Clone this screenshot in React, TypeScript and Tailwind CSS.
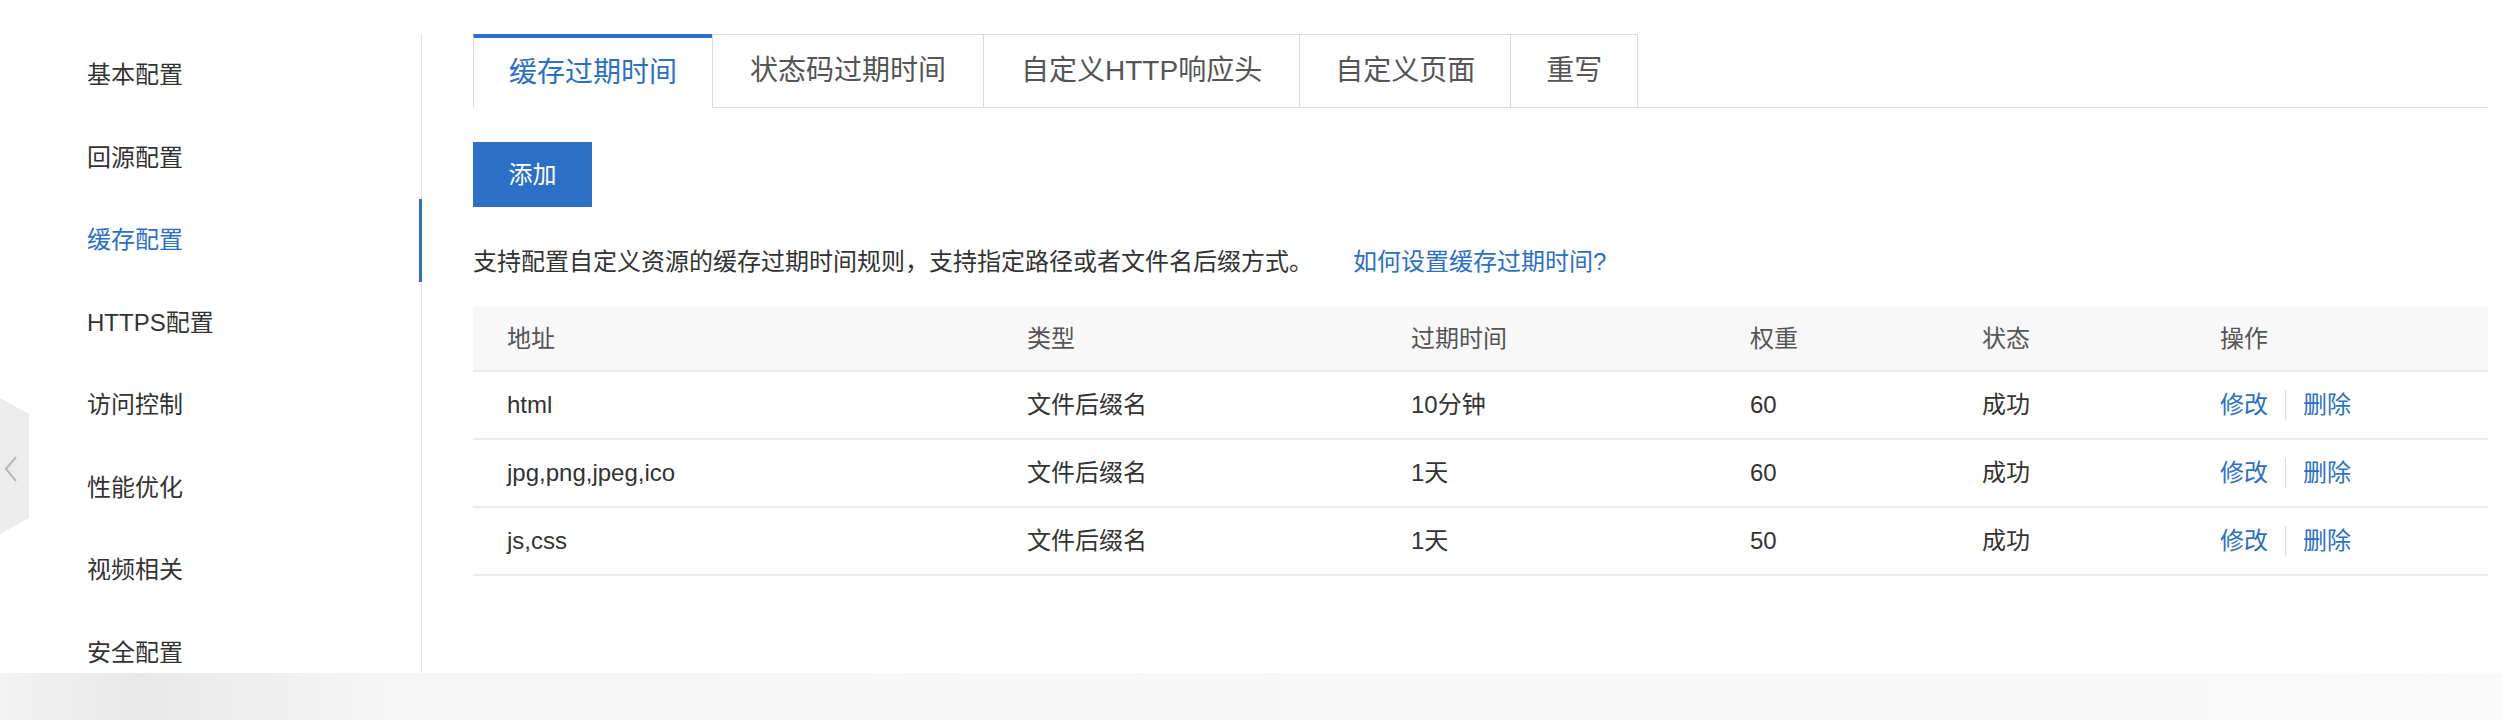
const menu = [
  "基本配置",
  "回源配置",
  "缓存配置",
  "HTTPS配置",
  "访问控制",
  "性能优化",
  "视频相关",
  "安全配置",
];

const tabs = ["缓存过期时间", "状态码过期时间", "自定义HTTP响应头", "自定义页面", "重写"];

const rows = [
  { path: "html", type: "文件后缀名", ttl: "10分钟", weight: "60", status: "成功" },
  { path: "jpg,png,jpeg,ico", type: "文件后缀名", ttl: "1天", weight: "60", status: "成功" },
  { path: "js,css", type: "文件后缀名", ttl: "1天", weight: "50", status: "成功" },
];

const cols = "grid grid-cols-[520px_384px_339px_232px_238px_1fr]";

export default function App() {
  return (
    <div className="relative flex h-[720px] w-[2502px] flex-col overflow-hidden bg-white text-[#333] [font-family:'Liberation_Sans','Noto_Sans_CJK_SC',sans-serif]">
      <div className="flex h-[673px] shrink-0 pt-[34px]">
        {/* side menu */}
        <div className="w-[422px] shrink-0 border-r border-[#e3e3e3]">
          {menu.map((item, i) => (
            <div
              key={item}
              className={`flex h-[82.5px] items-center pl-[87px] text-[24px] ${
                i === 2
                  ? "-mr-px border-r-[3px] border-[#2b6fc7] text-[#2b6fc7]"
                  : "text-[#333]"
              }`}
            >
              {item}
            </div>
          ))}
        </div>

        {/* main */}
        <div className="flex-1 pl-[51px] pr-[15px]">
          <div className="flex border-b border-[#dcdcdc]">
            {tabs.map((tab, i) => (
              <div
                key={tab}
                className={`-mb-px flex h-[74px] items-center border-l border-[#dcdcdc] text-[28px] last:border-r ${
                  i === 1 || i === 2 ? "px-[37px]" : "px-[35px]"
                } ${
                  i === 0
                    ? "border-t-4 border-t-[#2b6fc7] border-b border-b-white text-[#2b6fc7]"
                    : "border-t border-b text-[#555]"
                }`}
              >
                {tab}
              </div>
            ))}
          </div>

          <button className="mt-[34px] flex h-[65px] w-[119px] items-center justify-center bg-[#2b6fc7] text-[24px] text-white">
            添加
          </button>

          <p className="mt-[37px] flex h-[36px] items-center text-[24px] text-[#333]">
            支持配置自定义资源的缓存过期时间规则，支持指定路径或者文件名后缀方式。
            <a className="ml-[40px] text-[#2b6fc7]">如何设置缓存过期时间?</a>
          </p>

          <div className="mt-[27px] w-[2015px] text-[24px]">
            <div className={`${cols} h-[65px] items-center border-b-2 border-[#ebebeb] bg-[#f8f8f8] text-[#555]`}>
              {["地址", "类型", "过期时间", "权重", "状态", "操作"].map((h) => (
                <div key={h} className="px-[34px]">
                  {h}
                </div>
              ))}
            </div>
            {rows.map((r) => (
              <div key={r.path} className={`${cols} h-[68px] items-center border-b-2 border-[#ececec]`}>
                <div className="px-[34px]">{r.path}</div>
                <div className="px-[34px]">{r.type}</div>
                <div className="px-[34px]">{r.ttl}</div>
                <div className="px-[34px]">{r.weight}</div>
                <div className="px-[34px]">{r.status}</div>
                <div className="flex items-center px-[34px] text-[#2b6fc7]">
                  <span>修改</span>
                  <span className="mx-[17px] h-[30px] w-px bg-[#dddddd]" />
                  <span>删除</span>
                </div>
              </div>
            ))}
          </div>
        </div>
      </div>

      {/* bottom strip */}
      <div className="flex-1 bg-[linear-gradient(90deg,#f3f3f3_0px,#e8e8e8_140px,#f6f6f6_380px,#fafafa_100%)]" />

      {/* collapse handle */}
      <div className="absolute left-0 top-[398px] h-[136px] w-[29px]">
        <svg width="29" height="136" viewBox="0 0 29 136">
          <polygon points="0,0 29,16 29,120 0,136" fill="#ececec" />
          <polyline points="16,59 6,71 16,83" fill="none" stroke="#b8b8b8" strokeWidth="2" />
        </svg>
      </div>
    </div>
  );
}
